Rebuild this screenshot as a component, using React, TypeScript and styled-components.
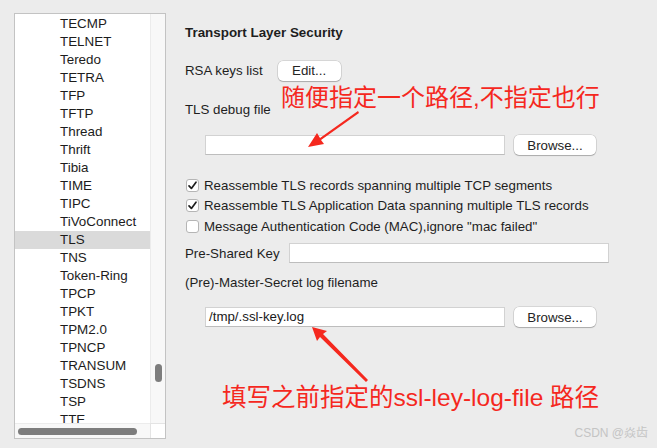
import React from "react";
import styled, { createGlobalStyle } from "styled-components";

const Global = createGlobalStyle`
  html, body { margin: 0; padding: 0; background: #ececec; }
  body { font-family: "Liberation Sans", Arial, sans-serif; color: #1e1e1e; }
`;

const Page = styled.div`
  position: relative;
  width: 657px;
  height: 448px;
  overflow: hidden;
  background: #ececec;
  display: flex;
  padding: 13px 0 0 14px;
  box-sizing: border-box;
`;

const ListBox = styled.div`
  width: 152px;
  height: 426px;
  box-sizing: border-box;
  border: 1px solid #c3c3c3;
  background: #fff;
  display: grid;
  grid-template-columns: 1fr 15px;
  grid-template-rows: 1fr 15px;
  flex-shrink: 0;
`;

const ListArea = styled.div`
  overflow: hidden;
  padding-top: 1px;
`;

const Item = styled.div<{ $selected?: boolean }>`
  height: 18px;
  line-height: 18px;
  padding-left: 45px;
  font-size: 13.4px;
  color: #1c1c1c;
  background: ${(p) => (p.$selected ? "#dadada" : "transparent")};
  white-space: nowrap;
`;

const VScroll = styled.div`
  background: #f8f8f8;
  border-left: 1px solid #ececec;
  display: flex;
  justify-content: center;
  padding-top: 350px;
  box-sizing: border-box;
`;

const VThumb = styled.div`
  width: 7px;
  height: 18px;
  border-radius: 4px;
  background: #7d7d7d;
`;

const HScroll = styled.div`
  background: #f8f8f8;
  border-top: 1px solid #ececec;
  display: flex;
  align-items: center;
  padding-left: 3px;
`;

const HThumb = styled.div`
  width: 119px;
  height: 7px;
  border-radius: 4px;
  background: #7d7d7d;
`;

const Corner = styled.div`
  background: #fff;
  border-left: 1px solid #e4e4e4;
  border-top: 1px solid #e4e4e4;
`;

const Form = styled.div`
  margin-left: 19px;
  display: flex;
  flex-direction: column;
  font-size: 13.3px;
  color: #1e1e1e;
`;

const Title = styled.div`
  font-weight: bold;
  font-size: 13.4px;
  height: 16px;
  line-height: 16px;
  margin-top: 12px;
`;

const Row = styled.div<{ $top: number; $h?: number; $indent?: number }>`
  display: flex;
  align-items: center;
  height: ${(p) => p.$h ?? 20}px;
  margin-top: ${(p) => p.$top}px;
  padding-left: ${(p) => p.$indent ?? 0}px;
  white-space: nowrap;
`;

const Label = styled.span`
  font-size: 13.3px;
`;

const Button = styled.div<{ $w: number; $ml: number }>`
  width: ${(p) => p.$w}px;
  height: 20px;
  margin-left: ${(p) => p.$ml}px;
  box-sizing: border-box;
  background: #fff;
  border-radius: 5px;
  box-shadow: 0 0 0 0.5px rgba(0, 0, 0, 0.18), 0 1px 1px rgba(0, 0, 0, 0.2);
  display: flex;
  align-items: center;
  justify-content: center;
  font-size: 13.3px;
  color: #242424;
`;

const Input = styled.div<{ $w: number; $ml?: number }>`
  width: ${(p) => p.$w}px;
  height: 20px;
  margin-left: ${(p) => p.$ml ?? 0}px;
  box-sizing: border-box;
  background: #fff;
  border: 1px solid #d2d2d2;
  border-bottom-color: #bdbdbd;
  font-size: 13.3px;
  line-height: 18px;
  padding-left: 3px;
  color: #1a1a1a;
`;

const Check = styled.span`
  width: 13px;
  height: 13px;
  box-sizing: border-box;
  border-radius: 3px;
  border: 1px solid #b5b5b5;
  background: #fff;
  margin-left: 1px;
  margin-right: 5px;
  display: inline-flex;
  align-items: center;
  justify-content: center;
  flex-shrink: 0;
`;

const Note = styled.div<{ $x: number; $y: number; $size: number }>`
  position: absolute;
  left: ${(p) => p.$x}px;
  top: ${(p) => p.$y}px;
  font-family: "Liberation Sans", "Noto Sans CJK SC", sans-serif;
  font-size: ${(p) => p.$size}px;
  line-height: 1;
  color: #f5281e;
  white-space: nowrap;
`;

const Arrow = styled.svg`
  position: absolute;
  left: 0;
  top: 0;
  pointer-events: none;
`;

const Watermark = styled.div`
  position: absolute;
  right: 9px;
  bottom: 8px;
  font-family: "Liberation Sans", "Noto Sans CJK SC", sans-serif;
  font-size: 12px;
  color: #c4c4c4;
  white-space: nowrap;
`;

const items = [
  "TECMP", "TELNET", "Teredo", "TETRA", "TFP", "TFTP", "Thread", "Thrift",
  "Tibia", "TIME", "TIPC", "TiVoConnect", "TLS", "TNS", "Token-Ring", "TPCP",
  "TPKT", "TPM2.0", "TPNCP", "TRANSUM", "TSDNS", "TSP", "TTE",
];

const Tick = () => (
  <svg width="11" height="11" viewBox="0 0 11 11">
    <path d="M2 5.8 L4.4 8.4 L9 2.2" fill="none" stroke="#1e1e1e" strokeWidth="1.7" strokeLinecap="round" strokeLinejoin="round" />
  </svg>
);

export default function App() {
  return (
    <>
      <Global />
      <Page>
        <ListBox>
          <ListArea>
            {items.map((t) => (
              <Item key={t} $selected={t === "TLS"}>{t}</Item>
            ))}
          </ListArea>
          <VScroll><VThumb /></VScroll>
          <HScroll><HThumb /></HScroll>
          <Corner />
        </ListBox>
        <Form>
          <Title>Transport Layer Security</Title>
          <Row $top={19} $h={21}>
            <Label>RSA keys list</Label>
            <Button $w={63} $ml={15}>Edit...</Button>
          </Row>
          <Row $top={18}>
            <Label>TLS debug file</Label>
          </Row>
          <Row $top={16} $indent={20}>
            <Input $w={300} />
            <Button $w={82} $ml={9}>Browse...</Button>
          </Row>
          <Row $top={20} $h={20}>
            <Check><Tick /></Check>
            <Label>Reassemble TLS records spanning multiple TCP segments</Label>
          </Row>
          <Row $top={0} $h={21}>
            <Check><Tick /></Check>
            <Label>Reassemble TLS Application Data spanning multiple TLS records</Label>
          </Row>
          <Row $top={0} $h={21}>
            <Check />
            <Label>Message Authentication Code (MAC),ignore "mac failed"</Label>
          </Row>
          <Row $top={6} $h={20}>
            <Label>Pre-Shared Key</Label>
            <Input $w={320} $ml={9} />
          </Row>
          <Row $top={9}>
            <Label>(Pre)-Master-Secret log filename</Label>
          </Row>
          <Row $top={15} $indent={20}>
            <Input $w={300}>/tmp/.ssl-key.log</Input>
            <Button $w={82} $ml={9}>Browse...</Button>
          </Row>
        </Form>
        <Note $x={281} $y={86} $size={24}>随便指定一个路径,不指定也行</Note>
        <Note $x={222} $y={386} $size={24.5}>填写之前指定的ssl-ley-log-file 路径</Note>
        <Arrow width="657" height="448" viewBox="0 0 657 448">
          <path d="M358 111 L320 138 L317 133 L308 147 L324 144 L321 140 L359 113 Z" fill="#f5281e" />
          <path d="M368 380 L323 334 L327 331 L312 327 L317 341 L320 337 L366 382 Z" fill="#f5281e" />
        </Arrow>
        <Watermark>CSDN @焱齿</Watermark>
      </Page>
    </>
  );
}
